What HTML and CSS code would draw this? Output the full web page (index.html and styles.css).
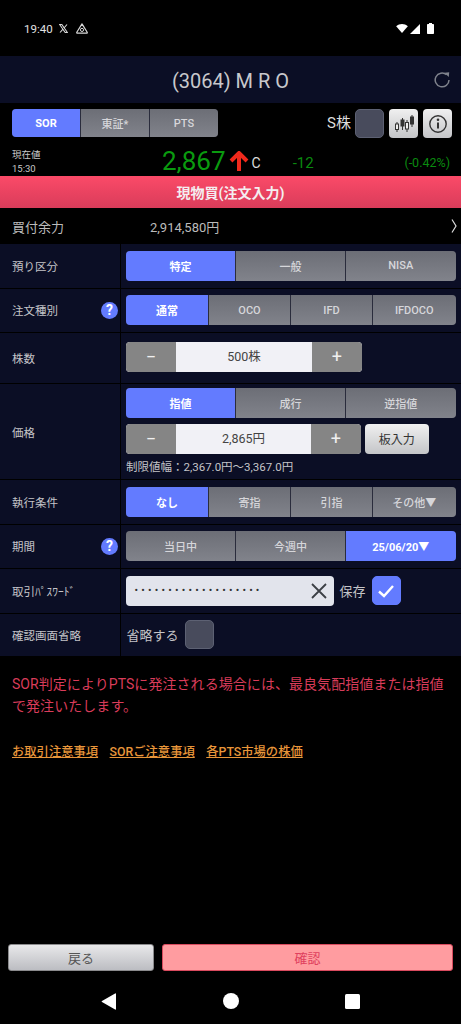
FILE: index.html
```html
<!DOCTYPE html>
<html lang="ja">
<head>
    <meta charset="UTF-8">
    <meta name="viewport" content="width=device-width, initial-scale=1.0">
    <title>現物買(注文入力)</title>
    <link rel="stylesheet" href="styles.css">
</head>
<body>
    <div class="screen">
        <div class="status-bar">
            <span class="status-time">19:40</span>
            <svg class="status-icon" width="9" height="9" viewBox="0 0 9 9"><path d="M.6 .5h2.200l5.600 8H6.200z" fill="none" stroke="#d8d8d8" stroke-width="1.100"/><path d="M8 .5L5 4M4 5.200L1 8.500" stroke="#d8d8d8" stroke-width="1.100"/></svg>
            <svg class="status-icon" width="12" height="11" viewBox="0 0 12 11"><path d="M6 .9L11.200 9.300a.6.6 0 0 1-.5.9H1.300a.6.6 0 0 1-.5-.9z" fill="none" stroke="#d8d8d8" stroke-width="1.200" stroke-linejoin="round"/><circle cx="6" cy="6.900" r="1.600" fill="none" stroke="#d8d8d8"/></svg>
            <div class="status-right">
                <svg width="12" height="9" viewBox="0 0 13 10"><path d="M0 2.500C3.800 -.8 9.200 -.8 13 2.500L6.500 10z" fill="#fff"/></svg>
                <svg width="10" height="10" viewBox="0 0 10 10"><path d="M10 0v10H0z" fill="#fff"/></svg>
                <svg class="battery" width="7" height="11" viewBox="0 0 7 11"><path d="M2 0h3v1h1.200a.8.8 0 0 1 .8.8v8.400a.8.8 0 0 1-.8.8H.8a.8.8 0 0 1-.8-.8V1.800A.8.8 0 0 1 .8 1H2z" fill="#fff"/></svg>
            </div>
        </div>

        <header class="title-bar">
            <h1>(3064) M R O</h1>
            <svg class="reload" width="16" height="17" viewBox="0 0 16 17"><path d="M12.600 3.700A6.900 6.900 0 1 0 15 9" fill="none" stroke="#7f828c" stroke-width="1.500"/><path d="M10.400 1.800l4.800 -.6 -.4 4.800z" fill="#7f828c"/></svg>
        </header>

        <div class="market-bar">
            <div class="seg seg-market">
                <button class="on">SOR</button>
                <button>東証*</button>
                <button>PTS</button>
            </div>
            <span class="s-label">S株</span>
            <span class="check"></span>
            <button class="tool-btn">
                <svg width="20" height="20" viewBox="0 0 20 20" fill="none" stroke="#333" stroke-width="1">
                    <path d="M3 8v10M8.500 4v12M13 6v12M18 1v12"/>
                    <rect x="1.500" y="10" width="3" height="5.500" fill="#eee"/>
                    <rect x="7" y="6" width="3" height="6" fill="#333"/>
                    <rect x="11.500" y="8.500" width="3" height="6.500" fill="#eee"/>
                    <rect x="16.500" y="3" width="3" height="7" fill="#333"/>
                </svg>
            </button>
            <button class="tool-btn">
                <svg width="20" height="20" viewBox="0 0 20 20"><circle cx="10" cy="10" r="8.200" fill="none" stroke="#333" stroke-width="1.400"/><path d="M10 8.500v6" stroke="#333" stroke-width="2"/><circle cx="10" cy="5.800" r="1.300" fill="#333"/></svg>
            </button>
        </div>

        <div class="price-bar">
            <div class="price-when">現在値<br>15:30</div>
            <span class="price-now">2,867</span>
            <svg class="price-arrow" width="20" height="21" viewBox="0 0 20 21"><path d="M10 20V3M2 10l8-8 8 8" fill="none" stroke="#f0291c" stroke-width="4"/></svg>
            <span class="price-c">C</span>
            <span class="price-diff">-12</span>
            <span class="price-pct">(-0.42%)</span>
        </div>

        <div class="banner">現物買(注文入力)</div>

        <div class="balance">
            <span class="balance-label">買付余力</span>
            <span class="balance-value">2,914,580円</span>
            <svg class="balance-arrow" width="6" height="14" viewBox="0 0 6 14"><path d="M1 .5L5 7 1 13.500" fill="none" stroke="#ddd" stroke-width="1.200"/></svg>
        </div>

        <div class="row row-a">
            <div class="row-label">預り区分</div>
            <div class="row-body">
                <div class="seg seg-3">
                    <button class="on">特定</button>
                    <button>一般</button>
                    <button>NISA</button>
                </div>
            </div>
        </div>

        <div class="row row-a">
            <div class="row-label">注文種別<span class="help">?</span></div>
            <div class="row-body">
                <div class="seg seg-4">
                    <button class="on">通常</button>
                    <button>OCO</button>
                    <button>IFD</button>
                    <button>IFDOCO</button>
                </div>
            </div>
        </div>

        <div class="row row-qty">
            <div class="row-label">株数</div>
            <div class="row-body">
                <div class="stepper">
                    <button>−</button>
                    <span class="stepper-value">500株</span>
                    <button>+</button>
                </div>
            </div>
        </div>

        <div class="row row-price">
            <div class="row-label">価格</div>
            <div class="row-body">
                <div class="seg seg-3">
                    <button class="on">指値</button>
                    <button>成行</button>
                    <button>逆指値</button>
                </div>
                <div class="price-input">
                    <div class="stepper stepper-price">
                        <button>−</button>
                        <span class="stepper-value">2,865円</span>
                        <button>+</button>
                    </div>
                    <button class="board-btn">板入力</button>
                </div>
                <div class="limit">制限値幅：2,367.0円〜3,367.0円</div>
            </div>
        </div>

        <div class="row row-a">
            <div class="row-label">執行条件</div>
            <div class="row-body">
                <div class="seg seg-4">
                    <button class="on">なし</button>
                    <button>寄指</button>
                    <button>引指</button>
                    <button>その他▼</button>
                </div>
            </div>
        </div>

        <div class="row row-a">
            <div class="row-label">期間<span class="help">?</span></div>
            <div class="row-body">
                <div class="seg seg-3">
                    <button>当日中</button>
                    <button>今週中</button>
                    <button class="on">25/06/20▼</button>
                </div>
            </div>
        </div>

        <div class="row row-a">
            <div class="row-label">取引ﾊﾟｽﾜｰﾄﾞ</div>
            <div class="row-body row-inline">
                <div class="password">
                    <span class="password-dots">•••••••••••••••••••</span>
                    <svg width="16" height="16" viewBox="0 0 16 16"><path d="M1 1l14 14M15 1L1 15" stroke="#3c3f45" stroke-width="1.800"/></svg>
                </div>
                <span class="inline-text">保存</span>
                <span class="check check-on">
                    <svg width="18" height="14" viewBox="0 0 18 14"><path d="M2 7.500l5 4.500L16 2" fill="none" stroke="#fff" stroke-width="2.400"/></svg>
                </span>
            </div>
        </div>

        <div class="row row-last">
            <div class="row-label">確認画面省略</div>
            <div class="row-body row-inline">
                <span class="inline-text">省略する</span>
                <span class="check"></span>
            </div>
        </div>

        <p class="notice">SOR判定によりPTSに発注される場合には、最良気配指値または指値で発注いたします。</p>

        <div class="links">
            <a href="#">お取引注意事項</a>
            <a href="#">SORご注意事項</a>
            <a href="#">各PTS市場の株価</a>
        </div>

        <div class="actions">
            <button class="back-btn">戻る</button>
            <button class="confirm-btn">確認</button>
        </div>

        <nav class="nav-bar">
            <svg width="16" height="17" viewBox="0 0 16 17"><path d="M15 1v15a.6.6 0 0 1-.9.5L1 9a.6.6 0 0 1 0-1L14.100 .5a.6.6 0 0 1 .9 .5z" fill="#fff"/></svg>
            <svg width="16" height="16" viewBox="0 0 16 16"><circle cx="8" cy="8" r="8" fill="#fff"/></svg>
            <svg width="15" height="15" viewBox="0 0 15 15"><rect width="15" height="15" rx="1.500" fill="#fff"/></svg>
        </nav>
    </div>
</body>
</html>
```

FILE: styles.css
```css
/* Base */
* {
    box-sizing: border-box;
}

html, body {
    margin: 0;
    background-color: #000;
}

body {
    font-family: Roboto, "Noto Sans CJK JP", sans-serif;
    color: #ccc;
}

button {
    font-family: inherit;
    border: none;
    padding: 0;
    margin: 0;
}

.screen {
    width: 461px;
    height: 1024px;
    display: flex;
    flex-direction: column;
    overflow: hidden;
}

/* Status bar */
.status-bar {
    height: 56px;
    flex: none;
    display: flex;
    align-items: center;
    padding: 1px 27px 0 24px;
    font-size: 11.500px;
    color: #e2e2e2;
}

.status-time {
    margin-right: 6px;
}

.status-icon {
    margin-right: 8px;
}

.status-right {
    margin-left: auto;
    display: flex;
    align-items: center;
    gap: 2px;
}

.battery {
    margin-left: 5px;
}

/* Title */
.title-bar {
    height: 47px;
    flex: none;
    padding-top: 2px;
    background-color: #0b0e25;
    position: relative;
    display: flex;
    align-items: center;
    justify-content: center;
}

.title-bar h1 {
    margin: 0;
    font-size: 20px;
    font-weight: 400;
    color: #c8c8cc;
}

.reload {
    position: absolute;
    right: 11px;
    top: 15px;
}

/* Market */
.market-bar {
    height: 45px;
    flex: none;
    display: flex;
    align-items: flex-start;
    padding: 6px 9px 0 12px;
}

.seg {
    display: grid;
    gap: 1px;
    border-radius: 4px;
    overflow: hidden;
    background-color: #2a2c3c;
}

.seg button {
    background: linear-gradient(#6c6e76, #81838b);
    color: #d6d6da;
    font-size: 11px;
    font-weight: 500;
    height: 30px;
    padding: 0;
}

.seg button.on {
    background: #637bff;
    color: #fff;
    font-weight: 700;
}

.seg-market {
    width: 206px;
    grid-template-columns: 68px 68px 68px;
}

.seg-market button {
    height: 28px;
}

.s-label {
    margin-left: auto;
    margin-right: 4px;
    font-size: 15px;
    line-height: 29px;
    color: #ddd;
}

.check {
    display: inline-block;
    width: 29px;
    height: 29px;
    flex: none;
    border: 1px solid #5d6173;
    border-radius: 5px;
    background-color: #484b5c;
}

.tool-btn {
    width: 29px;
    height: 29px;
    margin-left: 5px;
    border-radius: 4px;
    background: linear-gradient(#f0f0f0, #c4c5c8);
    display: flex;
    align-items: center;
    justify-content: center;
}

/* Price */
.price-bar {
    height: 27px;
    flex: none;
    position: relative;
    display: flex;
    align-items: center;
}

.price-when {
    margin-left: 12px;
    width: 150px;
    font-size: 9.500px;
    line-height: 14px;
    color: #c8c8c8;
}

.price-now {
    font-size: 26px;
    color: #0a9a0f;
    line-height: 27px;
}

.price-arrow {
    margin-left: 3px;
}

.price-c {
    margin-left: 3px;
    margin-top: 2px;
    font-size: 14px;
    color: #ddd;
}

.price-diff {
    margin-left: 32px;
    font-size: 15px;
    color: #0a8a0f;
    margin-top: 2px;
}

.price-pct {
    margin-left: auto;
    margin-right: 11px;
    margin-top: 2px;
    font-size: 12.500px;
    color: #0a8a0f;
}

/* Banner */
.banner {
    height: 32px;
    flex: none;
    margin-top: 1px;
    background: linear-gradient(#fb4a68, #d93c5a);
    color: #f4eef0;
    font-size: 14px;
    font-weight: 700;
    display: flex;
    align-items: center;
    justify-content: center;
}

/* Balance */
.balance {
    height: 36px;
    flex: none;
    display: flex;
    align-items: center;
    padding: 0 4px 0 12px;
    font-size: 13px;
}

.balance-label {
    width: 138px;
    color: #bbb;
}

.balance-value {
    color: #bbb;
    font-size: 13px;
}

.balance-arrow {
    margin-left: auto;
}

/* Form rows */
.row {
    flex: none;
    display: grid;
    grid-template-columns: 120px 1fr;
    gap: 1px;
    margin-bottom: 1px;
    background-color: #000;
}

.row-a {
    height: 43.500px;
}

.row-qty {
    height: 50px;
}

.row-price {
    height: 95px;
}

.row-last {
    height: 42.500px;
}

.row-label {
    background-color: #0b0e25;
    color: #c4c4c8;
    font-size: 11.500px;
    padding: 0 2px 0 12px;
    display: flex;
    align-items: center;
    justify-content: space-between;
}

.help {
    width: 17px;
    height: 17px;
    border-radius: 50%;
    background-color: #637bff;
    color: #fff;
    font-size: 14px;
    font-weight: 700;
    display: flex;
    align-items: center;
    justify-content: center;
}

.row-body {
    background-color: #0b0e25;
    padding: 6.500px 5.500px 0 5px;
}

.row-inline {
    display: flex;
    align-items: center;
    padding-top: 0;
}

.seg-3 {
    grid-template-columns: 109px 109px 1fr;
}

.seg-4 {
    grid-template-columns: 82px 81px 81px 1fr;
}

/* Stepper */
.stepper {
    width: 235.500px;
    height: 30px;
    display: grid;
    grid-template-columns: 50px 1fr 49.500px;
    border-radius: 4px;
    overflow: hidden;
    background-color: #f1f1f6;
}

.row-qty .row-body {
    padding-top: 9px;
}

.row-price .row-body {
    padding-top: 3.500px;
}

.stepper button {
    background-color: #858585;
    color: #f0f0f0;
    font-size: 18px;
    font-weight: 400;
    line-height: 30px;
}

.stepper-value {
    color: #444;
    font-size: 12.500px;
    line-height: 30px;
    text-align: center;
}

.price-input {
    display: flex;
    gap: 4px;
    margin-top: 6px;
}

.stepper-price {
    width: 234.500px;
}

.board-btn {
    width: 64.500px;
    height: 30px;
    border-radius: 4px;
    background: linear-gradient(#f0f0f0, #c4c5c8);
    color: #333;
    font-size: 12px;
}

.limit {
    margin-top: 4px;
    font-size: 11.500px;
    line-height: 18px;
    color: #c4c4c8;
}

/* Password */
.password {
    width: 207.500px;
    height: 30px;
    flex: none;
    border-radius: 4px;
    background-color: #e2e4ec;
    display: flex;
    align-items: center;
    justify-content: space-between;
    padding: 0 7px 0 8.500px;
}

.password-dots {
    color: #333;
    font-size: 10.500px;
    letter-spacing: 3.200px;
    white-space: nowrap;
}

.inline-text {
    margin-left: 6px;
    margin-right: 6px;
    font-size: 13px;
    color: #c4c4c8;
}

.row-last .inline-text {
    margin-left: .500px;
}

.check-on {
    background-color: #637bff;
    border-color: #637bff;
    display: flex;
    align-items: center;
    justify-content: center;
}

/* Notice */
.notice {
    margin: 16px 0 0 0;
    padding: 0 10px 0 12px;
    color: #d93c5a;
    font-size: 14px;
    letter-spacing: .06px;
    line-height: 22px;
}

.links {
    margin-top: 25px;
    padding-left: 12px;
    display: flex;
    gap: 11.500px;
    font-size: 12.300px;
    font-weight: 500;
}

.links a {
    color: #e8963a;
}

/* Bottom */
.actions {
    margin-top: auto;
    display: flex;
    gap: 8px;
    padding: 0 8px;
}

.back-btn {
    width: 146px;
    height: 27px;
    border-radius: 3px;
    border: 1px solid #8a8a8c;
    background: linear-gradient(#e8e8ea, #bcbdc2);
    color: #555;
    font-size: 13px;
}

.confirm-btn {
    flex: 1;
    height: 27px;
    border-radius: 3px;
    border: 1px solid #d94a5e;
    background-color: #ff9ca0;
    color: #e0405e;
    font-size: 13px;
}

.nav-bar {
    height: 53px;
    flex: none;
    display: flex;
    align-items: center;
    justify-content: center;
    gap: 106px;
    padding-top: 7px;
}
```
